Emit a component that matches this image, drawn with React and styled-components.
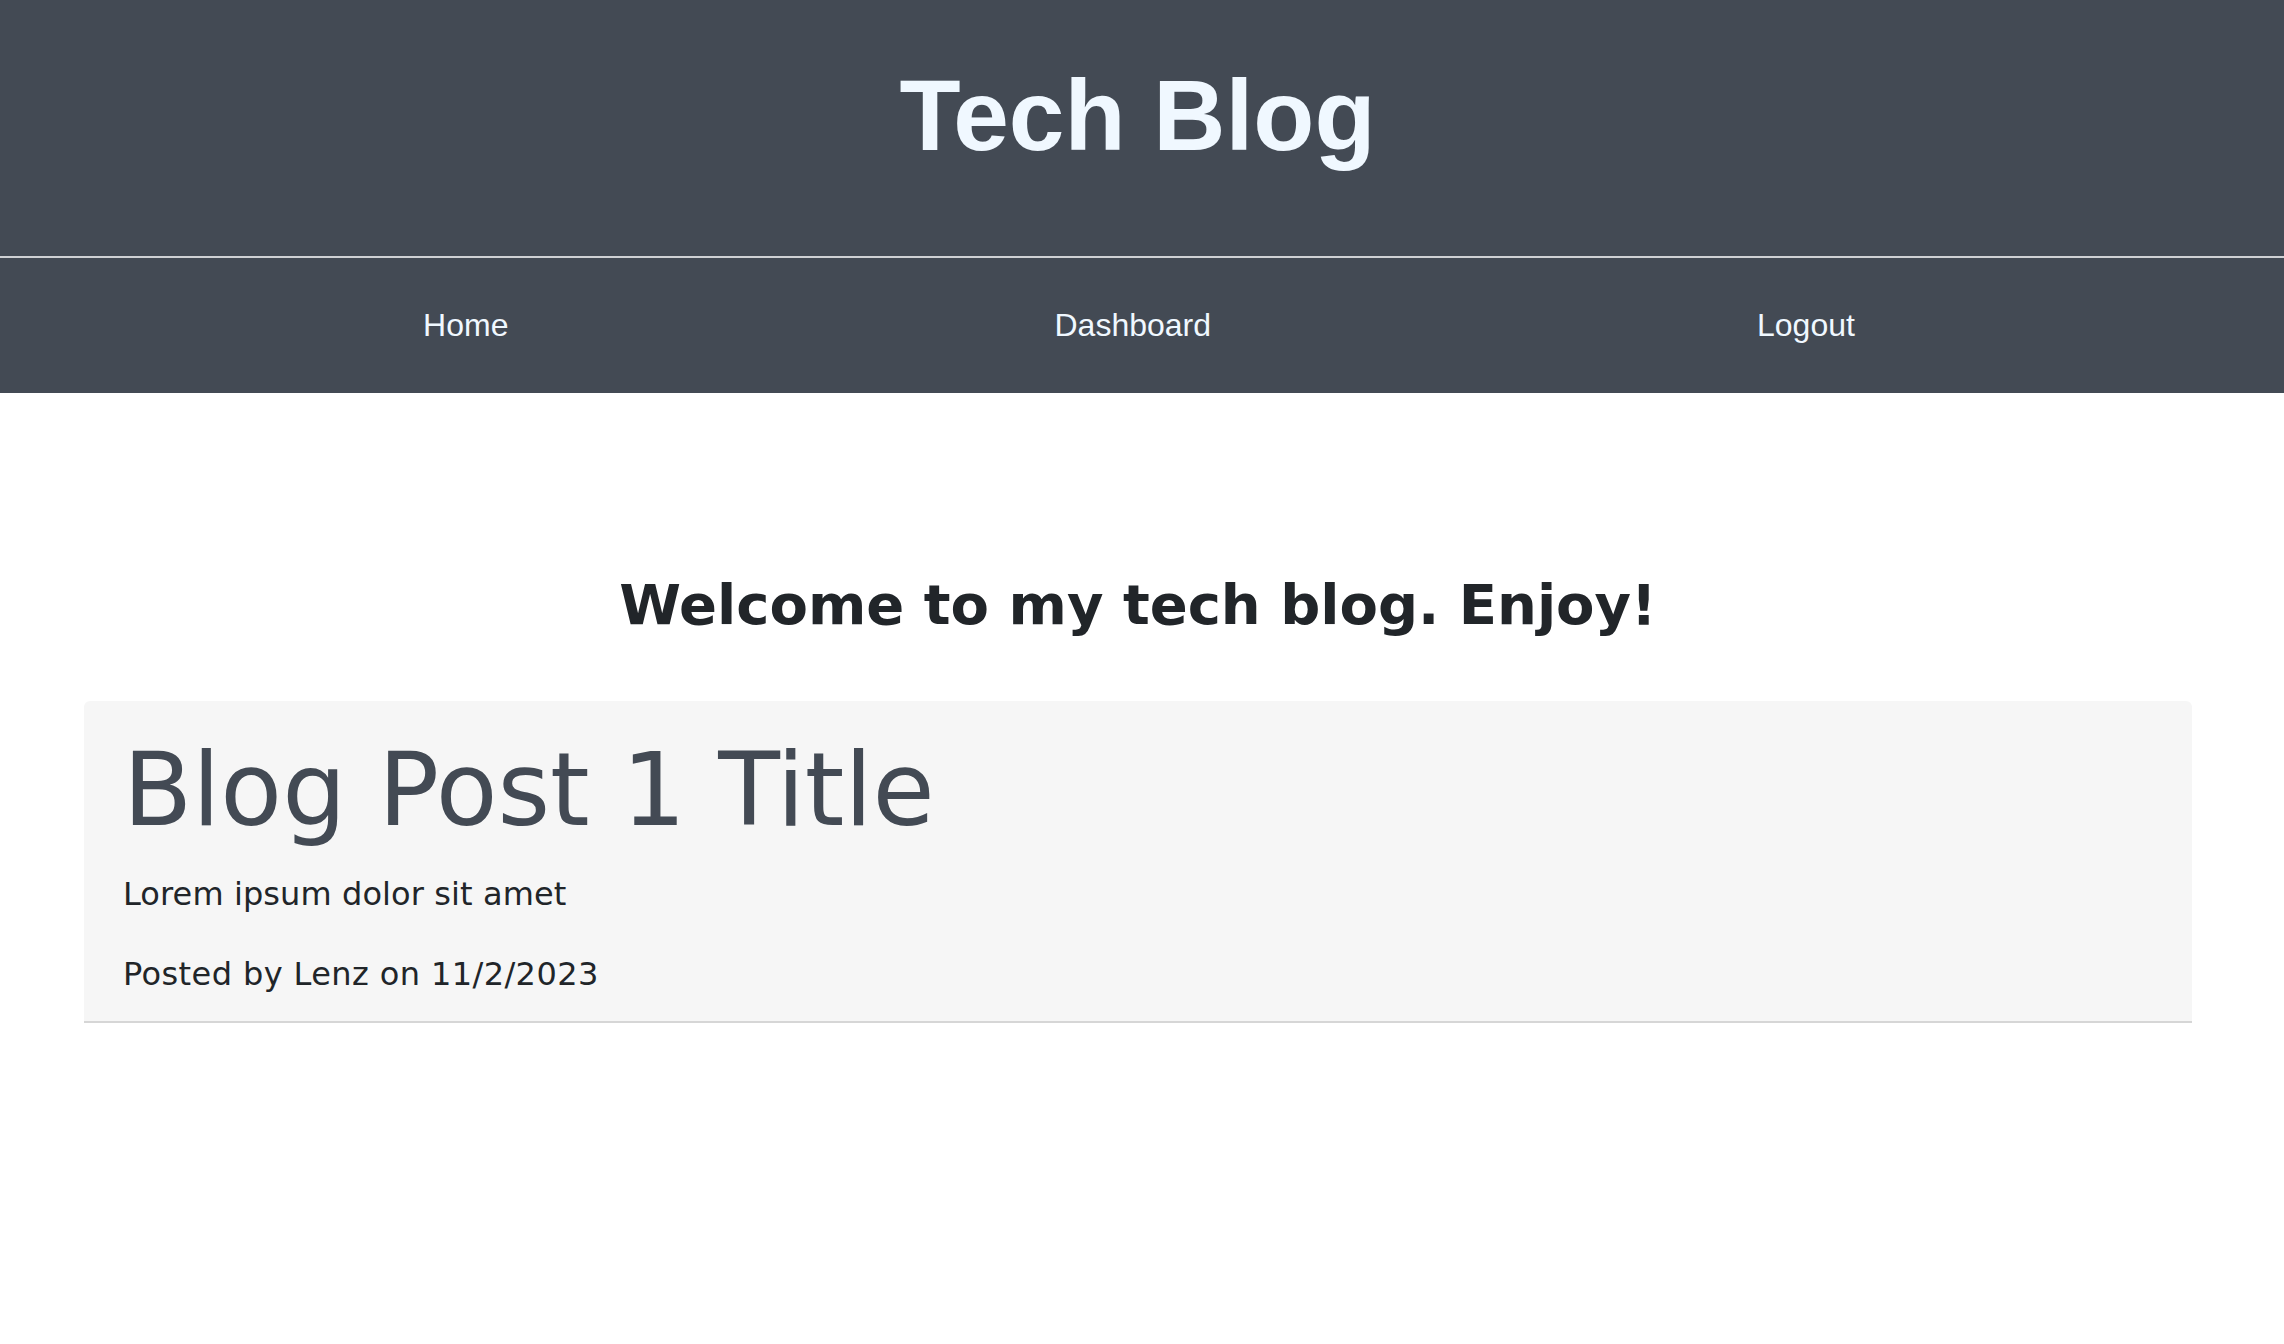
import React from "react";
import styled, { createGlobalStyle } from "styled-components";

const GlobalStyle = createGlobalStyle`
  html, body {
    margin: 0;
    padding: 0;
    background: #ffffff;
  }
  body {
    font-family: "DejaVu Sans", Verdana, sans-serif;
    color: #212529;
  }
  * { box-sizing: border-box; }
`;

const Header = styled.header`
  background: #434a54;
`;

const TitleBar = styled.div`
  height: 258px;
  padding: 65px 9px 0 0;
  border-bottom: 2px solid #cfd1d4;
  text-align: center;
`;

const SiteTitle = styled.h1`
  margin: 0;
  font-family: "Liberation Sans", Arial, Helvetica, sans-serif;
  font-weight: 700;
  font-size: 100px;
  line-height: 100px;
  letter-spacing: 0;
  color: #f0f8ff;
`;

const Nav = styled.nav`
  height: 135px;
  display: flex;
  align-items: center;
  justify-content: center;
  gap: 546px;
  padding-right: 6px;
`;

const NavLink = styled.a`
  font-family: "Liberation Sans", Arial, Helvetica, sans-serif;
  font-size: 32px;
  color: #f0f8ff;
  text-decoration: none;
  cursor: pointer;
`;

const Main = styled.main`
  padding: 0 92px 0 84px;
`;

const Welcome = styled.h2`
  margin: 178px 0 63px;
  text-align: center;
  font-family: "DejaVu Sans", Verdana, sans-serif;
  font-weight: 700;
  font-size: 56px;
  line-height: 67px;
  color: #212529;
`;

const PostCard = styled.article`
  background: #f6f6f6;
  border-radius: 6px 6px 0 0;
  border-bottom: 2px solid #d6d6d6;
  padding: 29px 40px 23px 39px;
`;

const PostTitle = styled.h3`
  margin: 0;
  font-family: "DejaVu Sans", Verdana, sans-serif;
  font-weight: 400;
  font-size: 101px;
  line-height: 120px;
  color: #434a54;
`;

const PostText = styled.p`
  margin: ${(p) => (p.$first ? "20px" : "32px")} 0 0;
  font-family: "DejaVu Sans", Verdana, sans-serif;
  font-size: 32px;
  line-height: 48px;
  letter-spacing: ${(p) => (p.$first ? "0.1px" : "0.4px")};
  color: #212529;
`;

export default function App() {
  return (
    <>
      <GlobalStyle />
      <Header>
        <TitleBar>
          <SiteTitle>Tech Blog</SiteTitle>
        </TitleBar>
        <Nav>
          <NavLink>Home</NavLink>
          <NavLink>Dashboard</NavLink>
          <NavLink>Logout</NavLink>
        </Nav>
      </Header>
      <Main>
        <Welcome>Welcome to my tech blog. Enjoy!</Welcome>
        <PostCard>
          <PostTitle>Blog Post 1 Title</PostTitle>
          <PostText $first>Lorem ipsum dolor sit amet</PostText>
          <PostText>Posted by Lenz on 11/2/2023</PostText>
        </PostCard>
      </Main>
    </>
  );
}
